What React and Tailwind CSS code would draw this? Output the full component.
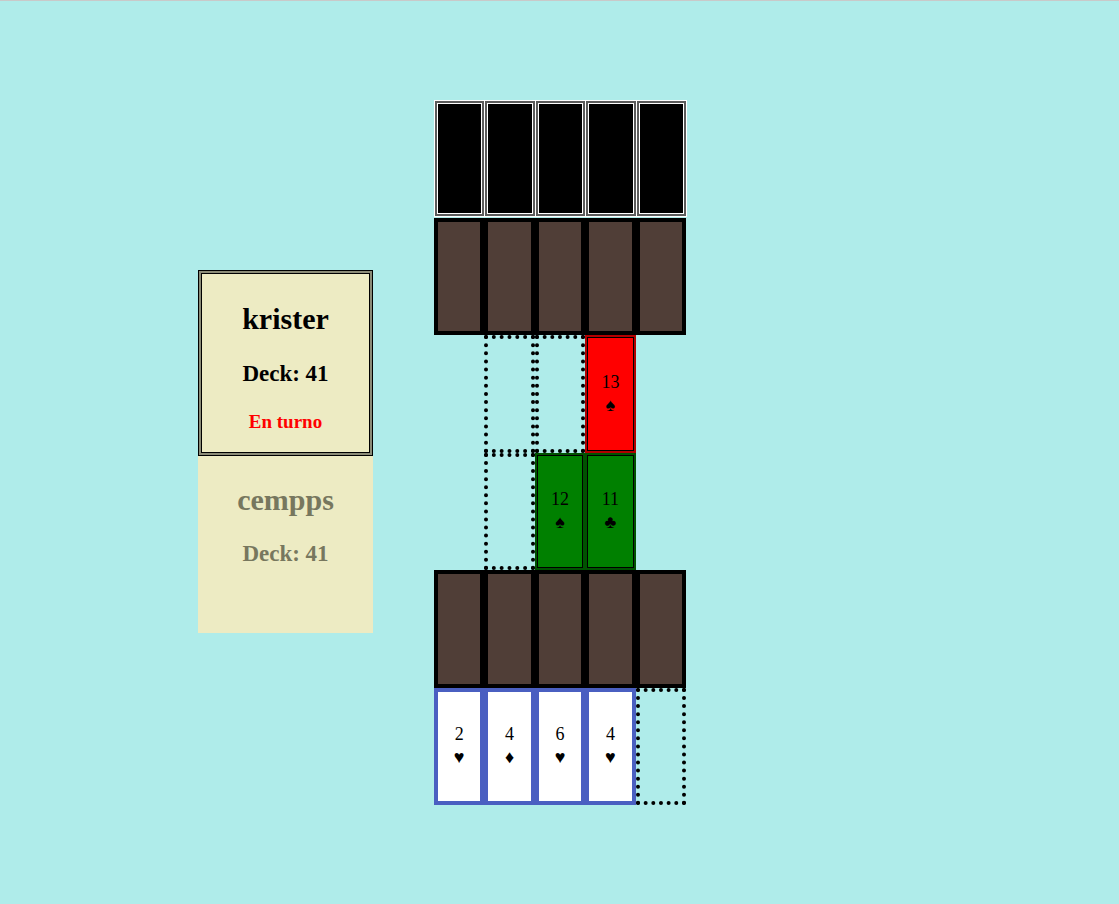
const rows = [
  ['back', 'back', 'back', 'back', 'back'],
  ['brown', 'brown', 'brown', 'brown', 'brown'],
  [null, 'slot', 'slot', { v: 13, s: '♠', c: 'red' }, null],
  [null, 'slot', { v: 12, s: '♠', c: 'green' }, { v: 11, s: '♣', c: 'green' }, null],
  ['brown', 'brown', 'brown', 'brown', 'brown'],
  [{ v: 2, s: '♥', c: 'hand' }, { v: 4, s: '♦', c: 'hand' }, { v: 6, s: '♥', c: 'hand' }, { v: 4, s: '♥', c: 'hand' }, 'slot'],
];

const faceStyles = {
  red: 'border-2 border-[#b20000] bg-[#ff0000] shadow-[inset_0_0_0_1px_#000]',
  green: 'border-2 border-[#005200] bg-[#008000] shadow-[inset_0_0_0_1px_#000]',
  hand: 'border-4 border-[#4a5fc1] bg-white',
};

function Cell({ cell }) {
  if (!cell) return <div />;
  if (cell === 'back') {
    return (
      <div className="mt-px ml-px h-[115px] border-2 border-[#5b5b5b] bg-black shadow-[0_0_0_1px_#fff,inset_0_0_0_1px_#fff]" />
    );
  }
  if (cell === 'brown') {
    return <div className="h-full border-4 border-black bg-[#503e37]" />;
  }
  if (cell === 'slot') {
    return <div className="h-full border-4 border-dotted border-black" />;
  }
  return (
    <div className={`h-full flex flex-col items-center justify-center text-[18px] leading-[23px] text-black ${faceStyles[cell.c]}`}>
      <span>{cell.v}</span>
      <span>{cell.s}</span>
    </div>
  );
}

export default function App() {
  return (
    <div
      className="min-h-[904px] bg-[#afecea] border-t border-[#c9c9c9] flex items-start pl-[198px] pt-[99px]"
      style={{ fontFamily: '"Liberation Serif", "DejaVu Serif", serif' }}
    >
      {/* players */}
      <div className="mt-[170px] w-[175px] bg-[#edebc3] font-bold text-center">
        <div className="h-[186px] border-4 border-double border-black bg-[#8b8b77]">
          <div className="h-full bg-[#edebc3] pt-[28px]">
            <div className="text-[30px] leading-[34px] text-black">krister</div>
            <div className="mt-[24px] text-[23px] leading-[28px] text-black">Deck: 41</div>
            <div className="mt-[22px] text-[19px] leading-[24px] text-[#ff0000]">En turno</div>
          </div>
        </div>
        <div className="h-[177px] pt-[27px] text-[#77775e]">
          <div className="text-[30px] leading-[34px]">cempps</div>
          <div className="mt-[23px] text-[23px] leading-[28px]">Deck: 41</div>
        </div>
      </div>

      {/* board */}
      <div className="ml-[61px] w-[252px] h-[705px] grid grid-cols-5 grid-rows-6">
        {rows.map((row, r) =>
          row.map((cell, c) => <Cell key={r + '-' + c} cell={cell} />)
        )}
      </div>
    </div>
  );
}
